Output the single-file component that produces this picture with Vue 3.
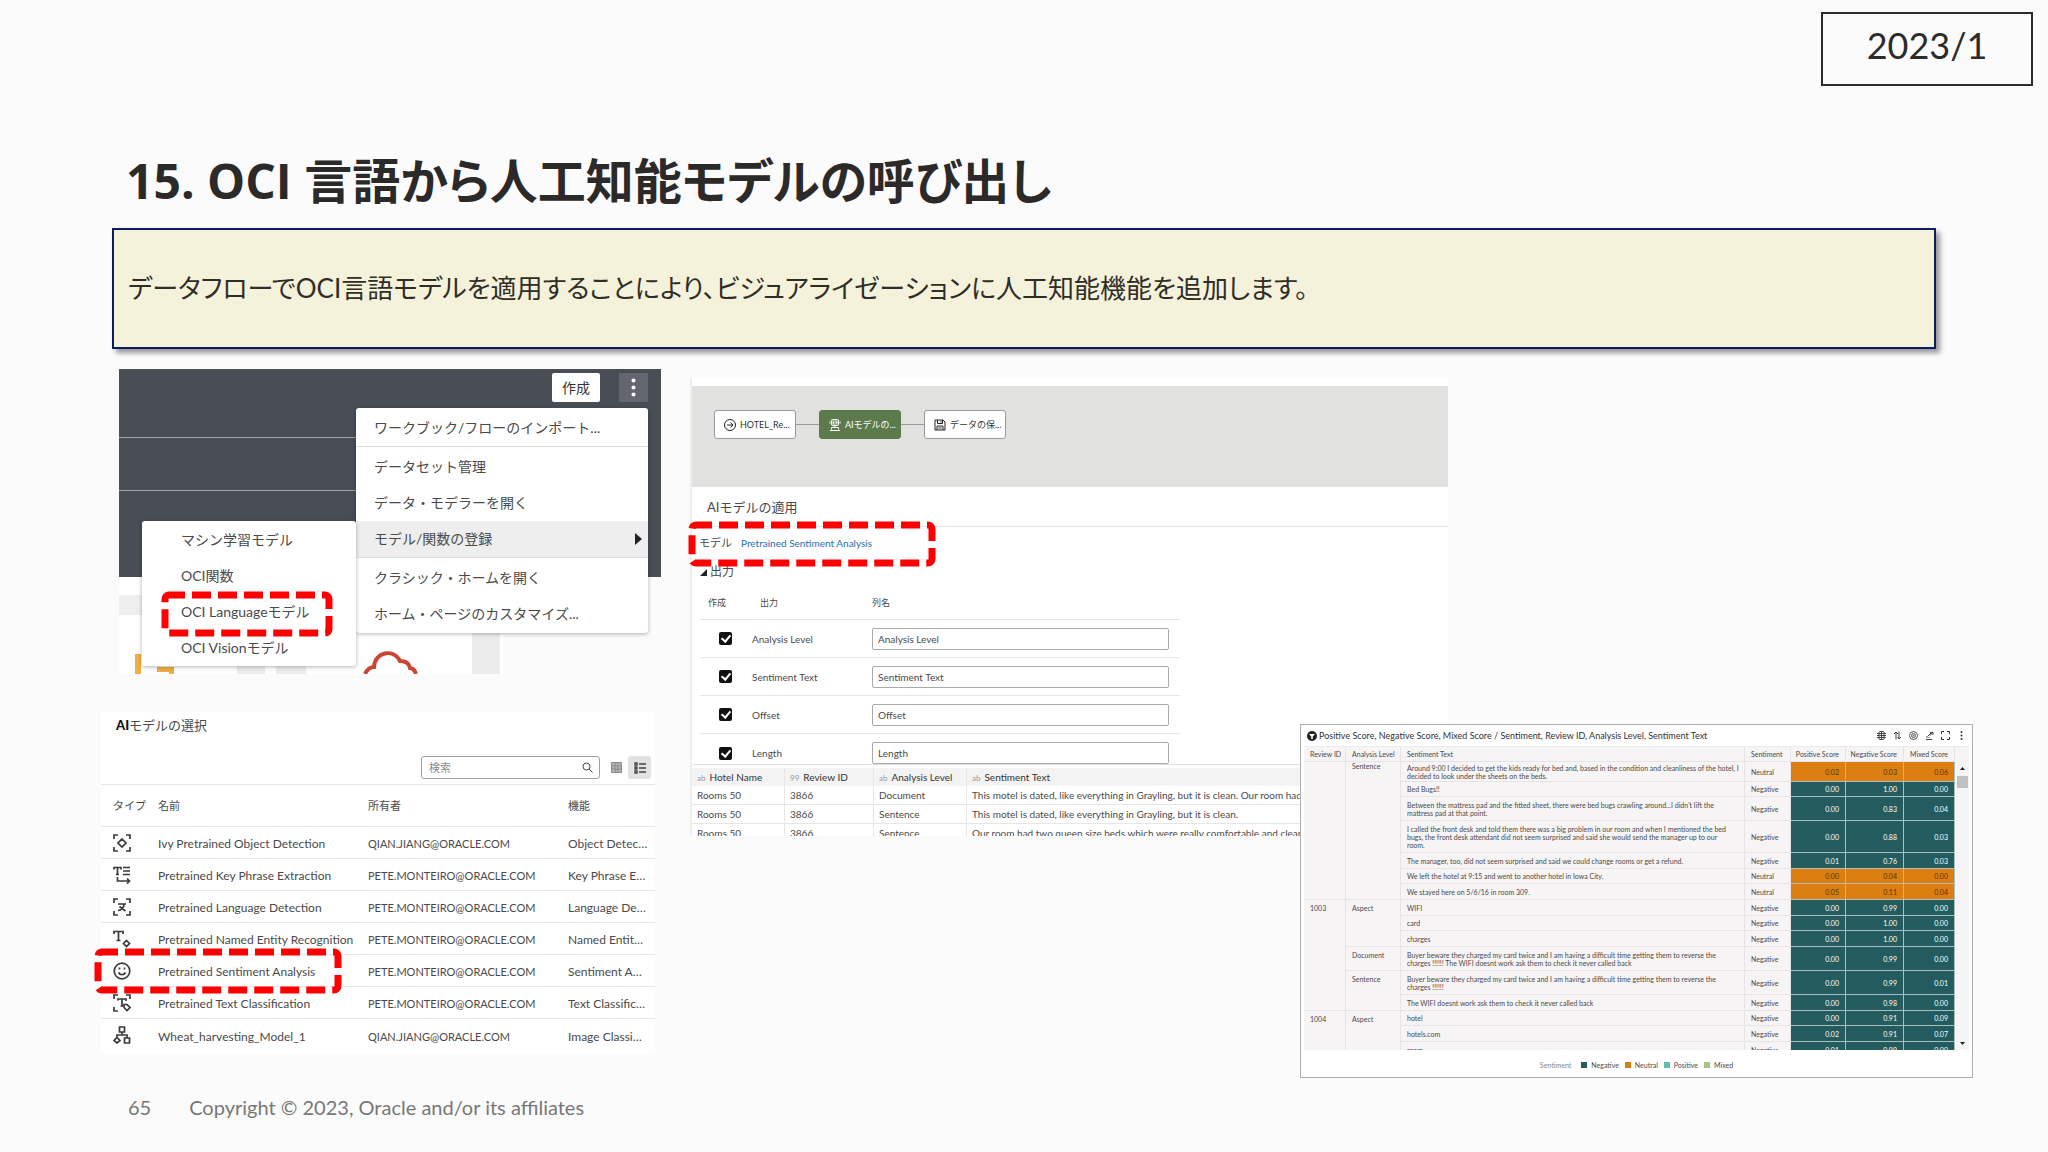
<script setup>
import { ref } from 'vue'

const menuTop = ['ワークブック/フローのインポート...']
const menuMid = ['データセット管理', 'データ・モデラーを開く']
const menuEnd = ['クラシック・ホームを開く', 'ホーム・ページのカスタマイズ...']
const submenu = ['マシン学習モデル', 'OCI関数', 'OCI Languageモデル', 'OCI Visionモデル']

const search = ref('')

const models = [
  { icon: 'object', name: 'Ivy Pretrained Object Detection', owner: 'QIAN.JIANG@ORACLE.COM', fn: 'Object Detec…' },
  { icon: 'phrase', name: 'Pretrained Key Phrase Extraction', owner: 'PETE.MONTEIRO@ORACLE.COM', fn: 'Key Phrase E…' },
  { icon: 'language', name: 'Pretrained Language Detection', owner: 'PETE.MONTEIRO@ORACLE.COM', fn: 'Language De…' },
  { icon: 'entity', name: 'Pretrained Named Entity Recognition', owner: 'PETE.MONTEIRO@ORACLE.COM', fn: 'Named Entit…' },
  { icon: 'smile', name: 'Pretrained Sentiment Analysis', owner: 'PETE.MONTEIRO@ORACLE.COM', fn: 'Sentiment A…' },
  { icon: 'text', name: 'Pretrained Text Classification', owner: 'PETE.MONTEIRO@ORACLE.COM', fn: 'Text Classific…' },
  { icon: 'tree', name: 'Wheat_harvesting_Model_1', owner: 'QIAN.JIANG@ORACLE.COM', fn: 'Image Classi…' },
]

const outputs = ref([
  { label: 'Analysis Level', value: 'Analysis Level', on: true },
  { label: 'Sentiment Text', value: 'Sentiment Text', on: true },
  { label: 'Offset', value: 'Offset', on: true },
  { label: 'Length', value: 'Length', on: true },
])

const previewCols = [
  { type: 'ab', label: 'Hotel Name' },
  { type: '99', label: 'Review ID' },
  { type: 'ab', label: 'Analysis Level' },
  { type: 'ab', label: 'Sentiment Text' },
]
const previewRows = [
  ['Rooms 50', '3866', 'Document', 'This motel is dated, like everything in Grayling, but it is clean. Our room had'],
  ['Rooms 50', '3866', 'Sentence', 'This motel is dated, like everything in Grayling, but it is clean.'],
  ['Rooms 50', '3866', 'Sentence', 'Our room had two queen size beds which were really comfortable and clean'],
]

const scores = [
  { h: 20, id: ['', 7], level: ['Sentence', 7], text: ['Around 9:00 I decided to get the kids ready for bed and, based in the condition and cleanliness of the hotel, I', 'decided to look under the sheets on the beds.'], mood: 'Neutral', v: ['0.02', '0.03', '0.06'] },
  { h: 15, text: ['Bed Bugs!!'], mood: 'Negative', v: ['0.00', '1.00', '0.00'] },
  { h: 24, text: ["Between the mattress pad and the fitted sheet, there were bed bugs crawling around...I didn't lift the", 'mattress pad at that point.'], mood: 'Negative', v: ['0.00', '0.83', '0.04'] },
  { h: 32, text: ['I called the front desk and told them there was a big problem in our room and when I mentioned the bed', 'bugs, the front desk attendant did not seem surprised and said she would send the manager up to our', 'room.'], mood: 'Negative', v: ['0.00', '0.88', '0.03'] },
  { h: 16, text: ['The manager, too, did not seem surprised and said we could change rooms or get a refund.'], mood: 'Negative', v: ['0.01', '0.76', '0.03'] },
  { h: 15, text: ['We left the hotel at 9:15 and went to another hotel in Iowa City.'], mood: 'Neutral', v: ['0.00', '0.04', '0.00'] },
  { h: 16, text: ['We stayed here on 5/6/16 in room 309.'], mood: 'Neutral', v: ['0.05', '0.11', '0.04'] },
  { h: 16, id: ['1003', 6], level: ['Aspect', 3], text: ['WIFI'], mood: 'Negative', v: ['0.00', '0.99', '0.00'] },
  { h: 15, text: ['card'], mood: 'Negative', v: ['0.00', '1.00', '0.00'] },
  { h: 16, text: ['charges'], mood: 'Negative', v: ['0.00', '1.00', '0.00'] },
  { h: 24, level: ['Document', 1], text: ['Buyer beware they charged my card twice and I am having a difficult time getting them to reverse the', 'charges !!!!!! The WIFI doesnt work ask them to check it never called back'], mood: 'Negative', v: ['0.00', '0.99', '0.00'] },
  { h: 24, level: ['Sentence', 2], text: ['Buyer beware they charged my card twice and I am having a difficult time getting them to reverse the', 'charges !!!!!!'], mood: 'Negative', v: ['0.00', '0.99', '0.01'] },
  { h: 16, text: ['The WIFI doesnt work ask them to check it never called back'], mood: 'Negative', v: ['0.00', '0.98', '0.00'] },
  { h: 15, id: ['1004', 3], level: ['Aspect', 3], text: ['hotel'], mood: 'Negative', v: ['0.00', '0.91', '0.09'] },
  { h: 16, text: ['hotels.com'], mood: 'Negative', v: ['0.02', '0.91', '0.07'] },
  { h: 16, text: ['room'], mood: 'Negative', v: ['0.01', '0.99', '0.00'] },
]

const legend = [
  { label: 'Negative', cls: 'negative' },
  { label: 'Neutral', cls: 'neutral' },
  { label: 'Positive', cls: 'positive' },
  { label: 'Mixed', cls: 'mixed' },
]
</script>

<template>
  <main class="slide">
    <header class="top">
      <div class="date">2023/1</div>
      <h1>15. OCI 言語から人工知能モデルの呼び出し</h1>
    </header>

    <p class="note">データフローでOCI言語モデルを適用することにより、ビジュアライゼーションに人工知能機能を追加します。</p>

    <div class="stage">
      <div class="left">
        <section class="console">
          <div class="dark">
            <div class="bar">
              <button class="create" type="button">作成</button>
              <button class="kebab" type="button" aria-label="メニュー">
                <svg width="5" height="19" viewBox="0 0 5 19"><g fill="#fff"><circle cx="2.5" cy="2.5" r="2" /><circle cx="2.5" cy="9.5" r="2" /><circle cx="2.5" cy="16.5" r="2" /></g></svg>
              </button>
            </div>
            <div class="line"></div>
            <div class="line"></div>
          </div>
          <svg class="tiles" viewBox="0 0 542 97" preserveAspectRatio="xMinYMin meet">
            <rect width="384" height="97" fill="#fff" />
            <rect y="18" width="30" height="20" fill="#efefef" />
            <rect x="118" y="80" width="28" height="17" fill="#ececec" />
            <rect x="157" y="80" width="30" height="17" fill="#ececec" />
            <rect x="353" y="50" width="28" height="47" fill="#ececec" />
            <path d="M16 77h6v20h-6zM38 90h17v7h-5v-2H38z" fill="#f0ad45" />
            <path d="M246 97c3-6 7-7 9-7c1-15 19-19 26-6c8 0 9 4 10 7c4 0 5 3 6 6" fill="none" stroke="#c74634" stroke-width="4" />
          </svg>

          <nav class="menu main">
            <a v-for="m in menuTop" :key="m" href="#">{{ m }}</a>
            <hr />
            <a v-for="m in menuMid" :key="m" href="#">{{ m }}</a>
            <a class="active" href="#">モデル/関数の登録<span class="arrow"></span></a>
            <hr />
            <a v-for="m in menuEnd" :key="m" href="#">{{ m }}</a>
          </nav>
          <nav class="menu sub">
            <a v-for="m in submenu" :key="m" href="#">{{ m }}</a>
            <svg class="mark mark-menu" width="170" height="44"><rect x="3" y="3" width="164" height="38" rx="4" /></svg>
          </nav>
        </section>

        <section class="picker">
          <h2><b>AI</b>モデルの選択</h2>
          <div class="tools">
            <label class="search">
              <input v-model="search" type="text" placeholder="検索" aria-label="検索" />
              <svg width="11" height="11" viewBox="0 0 11 11" fill="none" stroke="#444"><circle cx="4.500" cy="4.500" r="3.500" /><path d="M7 7l3.500 3.500" /></svg>
            </label>
            <button type="button" aria-label="グリッド">
              <svg width="11" height="11" viewBox="0 0 11 11" fill="#b5b5b5" stroke="#8c8c8c"><path d="M.5.5h10v10H.5zM.5 4h10M.5 7h10M4 .5v10M7 .5v10" /></svg>
            </button>
            <button class="on" type="button" aria-label="リスト">
              <svg width="12" height="12" viewBox="0 0 12 12" fill="none" stroke="#444" stroke-width="1.300"><path d="M1 1h2v2H1zM1 5h2v2H1zM1 9h2v2H1zM5 2h7M5 6h7M5 10h7" /></svg>
            </button>
          </div>
          <table>
            <thead>
              <tr><th class="c-type">タイプ</th><th class="c-name">名前</th><th class="c-owner">所有者</th><th>機能</th></tr>
            </thead>
            <tbody>
              <tr v-for="m in models" :key="m.name">
                <td>
                  <svg width="18" height="18" viewBox="0 0 18 18" fill="none" stroke="#3a3a3a" stroke-width="1.700">
                    <g v-if="m.icon === 'object'"><path d="M1 5V1h4M13 1h4v4M17 13v4h-4M5 17H1v-4M9 5l4 4-4 4-4-4z" /></g>
                    <g v-else-if="m.icon === 'phrase'"><path d="M1 3.500V1.500h7v2M4.500 1.500v7M3 8.500h3M10 1.500h7M10 5h7M10 8.500h7M4.500 11v4h12M14 12.500l2.500 2.500-2.500 2.500" /></g>
                    <g v-else-if="m.icon === 'language'"><path d="M1 5V1h4M13 1h4v4M17 13v4h-4M5 17H1v-4M5 6h8M11 6c0 4-3 6-6 6.500M6.500 8.500l6 4.500" /></g>
                    <g v-else-if="m.icon === 'entity'"><path d="M1 4V1.500h9V4M5.500 1.500v9M3.500 10.500h4M13.500 10.500l3 3-3 3-3-3z" /></g>
                    <g v-else-if="m.icon === 'smile'"><circle cx="9" cy="9" r="7.800" /><path d="M5.500 10.500c1.500 3 5.500 3 7 0" /><path d="M6.500 5.500v2M11.500 5.500v2" /></g>
                    <g v-else-if="m.icon === 'text'"><path d="M1 5V1h4M13 1h4v4M5 17H1v-4M5 6.500V5h8v2M9 5v7M7.500 12H10M11 10.500h3l3 3-3 3-3-3z" /></g>
                    <g v-else><path d="M6.500 1h5v5h-5zM9 6v3M4 12V9h10v3M11.500 12h5v5h-5zM4 11.500l3 3-3 2.500-3-2.500z" /></g>
                  </svg>
                </td>
                <td>{{ m.name }}</td>
                <td class="owner">{{ m.owner }}</td>
                <td>{{ m.fn }}</td>
              </tr>
            </tbody>
          </table>
          <svg class="mark mark-row" width="246" height="44"><rect x="3" y="3" width="240" height="38" rx="4" /></svg>
        </section>
      </div>

      <section class="flow">
        <div class="canvas">
          <div class="node">
            <svg width="12" height="12" viewBox="0 0 12 12" fill="none" stroke="#222"><circle cx="6" cy="6" r="5.500" /><path d="M3 6h6M6.500 3.500L9 6 6.500 8.500" /></svg>
            <span>HOTEL_Re...</span>
          </div>
          <div class="wire"></div>
          <div class="node active">
            <svg width="12" height="12" viewBox="0 0 12 12" fill="none" stroke="#fff"><rect x="2.500" y=".5" width="7" height="6" rx="1" fill="#fff" fill-opacity=".4" /><path d="M4.500 2.500v2M7.500 2.500v2M6 6.500v2M2.500 10.500v-2h7v2M1 11.500h10M1 2.500v2M11 2.500v2" /></svg>
            <span>AIモデルの...</span>
          </div>
          <div class="wire"></div>
          <div class="node">
            <svg width="12" height="12" viewBox="0 0 12 12" fill="none" stroke="#222"><path d="M1 1h8l2 2v8H1zM3.500 1v3.500h5V1M3 11V7h6v4M4.500 9h3M7 2v1.500" /></svg>
            <span>データの保...</span>
          </div>
        </div>
        <h2>AIモデルの適用</h2>
        <div class="model">
          <span>モデル</span><a href="#">Pretrained Sentiment Analysis</a>
          <svg class="mark mark-model" width="246" height="44"><rect x="3" y="3" width="240" height="38" rx="4" /></svg>
        </div>
        <div class="group"><svg width="7" height="7"><path d="M7 0v7H0z" fill="#222" /></svg>出力</div>
        <div class="form">
          <div class="form-row head"><span>作成</span><span>出力</span><span>列名</span></div>
          <div v-for="(o, i) in outputs" :key="o.label" class="form-row">
            <input :id="'out' + i" v-model="o.on" type="checkbox" />
            <label :for="'out' + i">{{ o.label }}</label>
            <input v-model="o.value" type="text" :aria-label="o.label" />
          </div>
        </div>
        <div class="preview">
          <table>
            <thead>
              <tr><th v-for="c in previewCols" :key="c.label"><i>{{ c.type }}</i>{{ c.label }}</th></tr>
            </thead>
            <tbody>
              <tr v-for="(r, i) in previewRows" :key="i"><td v-for="(c, j) in r" :key="j">{{ c }}</td></tr>
            </tbody>
          </table>
        </div>
      </section>

      <section class="viz">
        <div class="viz-head">
          <svg width="10" height="10" viewBox="0 0 10 10"><circle cx="5" cy="5" r="5" fill="#222" /><path d="M2 3h6L5.800 5.500V8H4.200V5.500z" fill="#fff" /></svg>
          <h2>Positive Score, Negative Score, Mixed Score / Sentiment, Review ID, Analysis Level, Sentiment Text</h2>
          <div class="icons">
            <svg width="9" height="9" viewBox="0 0 9 9" fill="none" stroke="#444"><rect x="2" y=".5" width="5" height="8" rx="1" /><path d="M0 2.500h9M0 4.500h9M0 6.500h9M4.500 1v7" /></svg>
            <svg width="9" height="9" viewBox="0 0 9 9" fill="none" stroke="#444"><path d="M3 8.500V1M1 3l2-2 2 2M6 .5V8M4.500 6L6 8l2-2" /></svg>
            <svg width="9" height="9" viewBox="0 0 9 9" fill="none" stroke="#555"><circle cx="4.500" cy="4.500" r="4" /><circle cx="4.500" cy="4.500" r="2" /><circle cx="4.500" cy="4.500" r=".5" /></svg>
            <svg width="9" height="9" viewBox="0 0 9 9" fill="none" stroke="#444"><path d="M1 8.500h6M2 7V5M4 7V6M3 5l3-3M5 1.500h3V4M8 1L5 4.500" /></svg>
            <svg width="9" height="9" viewBox="0 0 9 9" fill="none" stroke="#333"><path d="M.5 3V.5H3M6 .5h2.500V3M8.500 6v2.500H6M3 8.500H.5V6" /></svg>
            <svg width="9" height="9" viewBox="0 0 9 9" fill="#333"><circle cx="4.500" cy="1" r="1" /><circle cx="4.500" cy="4.500" r="1" /><circle cx="4.500" cy="8" r="1" /></svg>
          </div>
        </div>
        <div class="grid">
          <table>
            <colgroup><col class="w-id" /><col class="w-level" /><col /><col class="w-mood" /><col class="w-pos" /><col class="w-neg" /><col class="w-mix" /></colgroup>
            <thead>
              <tr><th>Review ID</th><th>Analysis Level</th><th>Sentiment Text</th><th>Sentiment</th><th class="num">Positive Score</th><th class="num">Negative Score</th><th class="num">Mixed Score</th></tr>
            </thead>
            <tbody>
              <tr v-for="(r, i) in scores" :key="i" :class="['h' + r.h, r.mood.toLowerCase()]">
                <td v-if="r.id" class="span" :rowspan="r.id[1]">{{ r.id[0] }}</td>
                <td v-if="r.level" class="span" :rowspan="r.level[1]">{{ r.level[0] }}</td>
                <td><div v-for="t in r.text" :key="t">{{ t }}</div></td>
                <td>{{ r.mood }}</td>
                <td v-for="(n, j) in r.v" :key="j" class="num val">{{ n }}</td>
              </tr>
            </tbody>
          </table>
          <div class="scroll">
            <svg width="5" height="3"><path d="M0 3L2.500 0 5 3z" fill="#222" /></svg>
            <div class="thumb"></div>
            <svg width="5" height="3"><path d="M0 0h5L2.500 3z" fill="#222" /></svg>
          </div>
        </div>
        <div class="legend">
          <span class="title">Sentiment</span>
          <span v-for="l in legend" :key="l.label" class="key"><i :class="l.cls"></i>{{ l.label }}</span>
        </div>
      </section>
    </div>

    <footer><span>65</span><span>Copyright © 2023, Oracle and/or its affiliates</span></footer>
  </main>
</template>

<style>
body {
  background: #fcfbfc;
}
</style>

<style scoped>
.slide {
  min-height: 100vh;
  box-sizing: border-box;
  padding: 12px 0 0;
  font-family: Lato, "Noto Sans CJK JP", sans-serif;
  color: #4a4a4a;
}
.slide * {
  box-sizing: border-box;
}
h1,
h2,
p {
  margin: 0;
  font-weight: 400;
}
button,
input {
  font: inherit;
  color: inherit;
  border: 0;
  margin: 0;
  padding: 0;
}
a {
  color: inherit;
  text-decoration: none;
}
svg {
  display: block;
  flex: none;
}
table {
  border-collapse: separate;
  border-spacing: 0;
}
th,
td {
  padding: 0;
  font-weight: 400;
  text-align: left;
}

.top {
  display: flex;
  flex-direction: column;
}
.date {
  align-self: flex-end;
  width: 212px;
  height: 74px;
  margin-right: 15px;
  border: 2px solid #2b2b2b;
  text-align: center;
  font-size: 36px;
  line-height: 62px;
  color: #2b2b2b;
}
h1 {
  margin: 60px 0 12px 126px;
  font-family: "Open Sans", "Noto Sans CJK JP", sans-serif;
  font-size: 48px;
  font-weight: 700;
  line-height: 70px;
  font-feature-settings: "palt";
  color: #2b2a29;
}
.note {
  margin: 0 112px;
  border: 2px solid #101c62;
  background: #f5f2dc;
  box-shadow: 4px 4px 5px rgba(0, 0, 0, 0.4);
  padding: 38px 14px;
  font-size: 26px;
  line-height: 41px;
  font-feature-settings: "palt";
  color: #2f2d26;
}

.stage {
  display: grid;
  grid-template-columns: minmax(0, 595fr) minmax(0, 610fr) minmax(0, 148fr) minmax(0, 525fr);
  align-items: start;
  margin: 20px 75px 0 95px;
}
.left {
  grid-area: 1 / 1;
}
.mark {
  position: absolute;
  fill: none;
  stroke: #fe0000;
  stroke-width: 7;
  stroke-dasharray: 19 7;
  stroke-dashoffset: 3;
  overflow: visible;
}

.console {
  position: relative;
  margin: 0 29px 0 24px;
}
.dark {
  height: 208px;
  background: #494d55;
}
.bar {
  display: flex;
  justify-content: flex-end;
  gap: 19px;
  height: 68px;
  padding: 4px 13px 0;
}
.create {
  width: 48px;
  height: 29px;
  border-radius: 2px;
  background: #fff;
  font-size: 14px;
  line-height: 26px;
  color: #333;
}
.kebab {
  display: flex;
  align-items: center;
  justify-content: center;
  width: 29px;
  height: 29px;
  background: #63666e;
}
.line {
  height: 53px;
  margin-right: 30px;
  border-top: 1px solid #a4a6aa;
}
.tiles {
  width: 100%;
}
.menu {
  position: absolute;
  background: #fff;
  border-radius: 3px;
  box-shadow: 0 1px 4px rgba(0, 0, 0, 0.3);
  font-size: 14px;
  line-height: 36px;
}
.menu a {
  display: block;
}
.menu hr {
  margin: 0 0 2px;
  border: 0;
  border-top: 1px solid #dedede;
}
.main {
  top: 39px;
  right: 13px;
  width: 292px;
  padding: 2px 0 1px;
}
.main a {
  display: flex;
  align-items: center;
  justify-content: space-between;
  padding: 0 6px 0 18px;
}
.main .active {
  background: #eee;
}
.arrow {
  border: 6px solid transparent;
  border-left: 7px solid #222;
  border-right: 0;
}
.sub {
  top: 152px;
  right: 305px;
  width: 214px;
  padding: 1px 0 0;
}
.sub a {
  padding-left: 39px;
}
.mark-menu {
  top: 71px;
  left: 20px;
}

.picker {
  position: relative;
  margin: 38px 35px 0 6px;
  padding-bottom: 2px;
  background: #fff;
}
.picker h2 {
  padding: 4px 15px 22px;
  font-size: 13px;
  line-height: 18px;
}
.picker h2 b {
  font-weight: 900;
  color: #111;
}
.tools {
  display: flex;
  justify-content: flex-end;
  align-items: center;
  padding: 0 4px 5px;
}
.search {
  display: flex;
  align-items: center;
  width: 179px;
  height: 23px;
  margin-right: 5px;
  padding: 0 6px 0 7px;
  border: 1px solid #a0a0a0;
  border-radius: 3px;
}
.search input {
  flex: 1;
  min-width: 0;
  background: none;
  font-size: 11px;
}
.search input::placeholder {
  color: #8a8a8a;
}
.tools button {
  display: flex;
  align-items: center;
  justify-content: center;
  width: 23px;
  height: 23px;
  border-radius: 3px;
  background: none;
}
.tools button.on {
  background: #e2e2e2;
}
.picker table {
  width: 100%;
  table-layout: fixed;
  border-top: 1px solid #e6e6e6;
  font-size: 12px;
  line-height: 16px;
}
.picker th {
  height: 42px;
  font-size: 11px;
}
.picker th,
.picker td {
  border-bottom: 1px solid #e8e8e8;
  white-space: nowrap;
}
.picker td {
  height: 32px;
  padding-top: 3px;
}
.picker td:first-child,
.picker th:first-child {
  padding-left: 12px;
}
.picker td:first-child {
  padding-top: 0;
}
.picker .owner {
  font-size: 11px;
}
.picker tbody tr:last-child td {
  border-bottom: 0;
}
.c-type {
  width: 57px;
}
.c-name {
  width: 210px;
}
.c-owner {
  width: 200px;
}
.mark-row {
  top: 237px;
  left: -6px;
}

.flow {
  grid-area: 1 / 2 / 2 / 4;
  margin-top: 9px;
  padding-top: 8px;
  border-left: 2px solid #eee;
  background: #fff;
}
.canvas {
  display: flex;
  height: 101px;
  padding: 24px 22px;
  background: #e1e1e0;
}
.node {
  display: flex;
  align-items: center;
  gap: 4px;
  width: 82px;
  height: 29px;
  padding-left: 9px;
  border: 1px solid #999;
  border-radius: 3px;
  background: #fff;
  font-size: 9px;
  white-space: nowrap;
  color: #333;
}
.node.active {
  border-color: #5c7a4b;
  background: #5c7a4b;
  color: #fff;
}
.wire {
  width: 23px;
  height: 15px;
  border-bottom: 1px solid #999;
}
.flow h2 {
  padding: 10px 15px 9px;
  border-bottom: 1px solid #e4e4e4;
  font-size: 13px;
  line-height: 20px;
}
.model {
  position: relative;
  display: flex;
  align-items: center;
  gap: 9px;
  padding: 6px 7px;
  font-size: 10px;
  line-height: 20px;
}
.model span {
  font-size: 11px;
}
.model a {
  color: #1f6fae;
}
.mark-model {
  top: -5px;
  left: -3px;
}
.group {
  display: flex;
  align-items: center;
  gap: 3px;
  padding: 4px 8px 1px;
  font-size: 12px;
  line-height: 18px;
}
.form {
  width: 480px;
  margin-left: 8px;
}
.form-row {
  display: grid;
  grid-template-columns: 52px 120px 297px;
  align-items: center;
  height: 38px;
  border-bottom: 1px solid #e6e6e6;
  font-size: 10px;
}
.form-row:last-child {
  height: 30px;
  padding-top: 8px;
  border-bottom: 0;
}
.form-row.head {
  padding-top: 4px;
  font-size: 9px;
}
.form-row.head span {
  padding-left: 8px;
}
.form-row.head span:last-child {
  padding-left: 0;
}
.form-row input[type="checkbox"] {
  appearance: none;
  width: 13px;
  height: 13px;
  margin-left: 19px;
  border-radius: 2px;
  background: #111;
}
.form-row input[type="checkbox"]:checked::before {
  content: "";
  display: block;
  width: 4px;
  height: 7px;
  margin: 1px 0 0 4px;
  border: solid #fff;
  border-width: 0 2px 2px 0;
  rotate: 40deg;
}
.form-row label {
  line-height: 16px;
}
.form-row input[type="text"] {
  height: 22px;
  padding-left: 5px;
  border: 1px solid #aaa;
  border-radius: 2px;
  background: #fff;
}
.preview {
  height: 72px;
  overflow: hidden;
  border-top: 1px solid #ddd;
  padding-top: 3px;
}
.preview table {
  width: 100%;
  table-layout: fixed;
  font-size: 10px;
  line-height: 12px;
  white-space: nowrap;
}
.preview th,
.preview td {
  height: 19px;
  padding-left: 5px;
  border-right: 1px solid #e6e6e6;
  border-bottom: 1px solid #e6e6e6;
  overflow: hidden;
}
.preview th {
  height: 18px;
  background: #f3f3f3;
  border-bottom: 0;
  color: #333;
}
.preview th i {
  margin-right: 4px;
  font-style: normal;
  font-size: 8px;
  color: #999;
}
.preview th:nth-child(1) {
  width: 93px;
}
.preview th:nth-child(2) {
  width: 89px;
}
.preview th:nth-child(3) {
  width: 93px;
}

.viz {
  grid-area: 1 / 3 / 2 / 5;
  margin-top: 355px;
  padding: 0 3px;
  border: 1px solid #aeaeae;
  background: #fff;
  z-index: 1;
}
.viz-head {
  display: flex;
  align-items: center;
  gap: 2px;
  height: 21px;
  padding: 0 3px;
}
.viz-head h2 {
  flex: 1;
  font-size: 9px;
  line-height: 16px;
  white-space: nowrap;
  color: #333;
}
.icons {
  display: flex;
  gap: 7px;
}
.grid {
  display: flex;
  height: 304px;
  overflow: hidden;
  background: #f6f4f5;
  border-top: 1px solid #ececec;
}
.grid table {
  flex: 1;
  min-width: 0;
  table-layout: fixed;
  font-size: 7px;
  line-height: 8px;
  white-space: nowrap;
}
.grid th,
.grid td {
  padding-left: 6px;
  border-right: 1px solid #e6e4e6;
  border-bottom: 1px solid #e6e4e6;
}
.grid th {
  height: 15px;
}
.grid .num {
  padding: 0 6px 0 0;
  text-align: right;
}
.grid .span {
  vertical-align: top;
  padding-top: 4px;
}
.grid tr:first-child .span {
  padding-top: 0;
}
.h15 td {
  height: 15px;
}
.h16 td {
  height: 16px;
}
.h20 td {
  height: 20px;
}
.h24 td {
  height: 24px;
}
.h32 td {
  height: 32px;
}
.w-id {
  width: 42px;
}
.w-level {
  width: 55px;
}
.w-mood {
  width: 46px;
}
.w-pos {
  width: 55px;
}
.w-neg {
  width: 58px;
}
.w-mix {
  width: 51px;
}
.grid td.val {
  border-color: #a9c0bf;
}
.negative .val {
  background: #235b5e;
  color: #fff;
}
.neutral .val {
  background: #dd7f10;
  color: #4d3308;
}
.scroll {
  display: flex;
  flex-direction: column;
  align-items: center;
  justify-content: space-between;
  width: 14px;
  padding: 20px 0 5px;
}
.thumb {
  width: 11px;
  height: 12px;
  margin: 6px 0 auto;
  background: #c1c1c1;
}
.legend {
  display: flex;
  align-items: center;
  justify-content: center;
  gap: 6px;
  height: 27px;
  padding-top: 3px;
  font-size: 7px;
  line-height: 9px;
}
.legend .title {
  margin-right: 4px;
  color: #888;
}
.key {
  display: flex;
  align-items: center;
  gap: 4px;
}
.key i {
  width: 6px;
  height: 6px;
}
.key .negative {
  background: #235b5e;
}
.key .neutral {
  background: #dd7f10;
}
.key .positive {
  background: #5fbfae;
}
.key .mixed {
  background: #a5c48a;
}

footer {
  display: flex;
  gap: 38px;
  padding: 15px 128px 28px;
  font-size: 20px;
  line-height: 28px;
  color: #777;
}
</style>
